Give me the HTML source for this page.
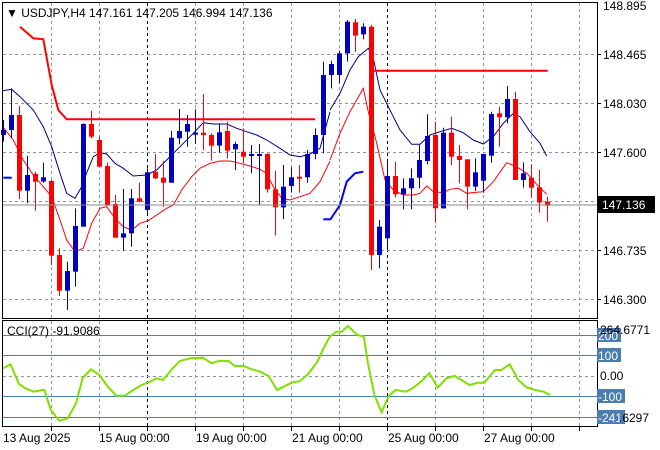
<!DOCTYPE html>
<html><head><meta charset="utf-8"><style>
html,body{margin:0;padding:0;background:#fff;width:660px;height:450px;overflow:hidden;font-family:"Liberation Sans",sans-serif}
svg{position:absolute;left:0;top:0}
text{font-family:"Liberation Sans",sans-serif;font-size:12px;fill:#000}
</style></head><body>
<svg id="s" width="660" height="450" xmlns="http://www.w3.org/2000/svg">
<g id="grid"></g>
<g id="lines"></g>
<g id="cand"></g>
<rect x="2.5" y="2.5" width="595" height="316" fill="none" stroke="#000"/>
<rect x="2.5" y="320.5" width="595" height="106" fill="none" stroke="#000"/>
<line x1="3" y1="205" x2="597" y2="205" stroke="#8a8a8a" stroke-width="1"/>
<text x="6" y="17" style="font-size:12px">▼ USDJPY,H4  147.161 147.205 146.994 147.136</text>
<g id="axis">
<text x="603" y="10">148.895</text>
<text x="603" y="59">148.465</text>
<text x="603" y="108">148.030</text>
<text x="603" y="157">147.600</text>
<text x="603" y="255">146.735</text>
<text x="603" y="304">146.300</text>
<rect x="597" y="196" width="58" height="17" fill="#000"/>
<text x="602" y="209" style="fill:#fff">147.136</text>
</g>
<g id="cci"></g>
<rect x="597" y="328" width="24" height="14" fill="#4a7eb0"/>
<text x="598" y="340" style="fill:#fff">200</text>
<text x="600" y="334">264.6771</text>
<rect x="597" y="348" width="24" height="14" fill="#4a7eb0"/>
<text x="598" y="360" style="fill:#fff">100</text>
<text x="600" y="380">0.00</text>
<rect x="597" y="389" width="28" height="14" fill="#4a7eb0"/>
<text x="598" y="401" style="fill:#fff">-100</text>
<rect x="597" y="410" width="28" height="14" fill="#4a7eb0"/>
<text x="598" y="422" style="fill:#fff">-241</text>
<text x="619" y="422">.6297</text>
<text x="7" y="335">CCI(27) -91.9086</text>
<text x="3" y="442">13 Aug 2025</text>
<text x="99" y="442">15 Aug 00:00</text>
<text x="196" y="442">19 Aug 00:00</text>
<text x="292" y="442">21 Aug 00:00</text>
<text x="388" y="442">25 Aug 00:00</text>
<text x="484" y="442">27 Aug 00:00</text>
</svg>
<script>
var NS="http://www.w3.org/2000/svg";
function el(p,t,a){var e=document.createElementNS(NS,t);for(var k in a)e.setAttribute(k,a[k]);document.getElementById(p).appendChild(e);return e;}
var vx=[51,99,147,195,243,291,339,387,435,483,531,579];
vx.forEach(function(x,i){var blk=(x==147||x==387);
 el("grid","line",{x1:x+.5,y1:3,x2:x+.5,y2:318,stroke:blk?"#000":"#8a96a2","stroke-dasharray":"3,3"});
 el("grid","line",{x1:x+.5,y1:321,x2:x+.5,y2:426,stroke:blk?"#000":"#8a96a2","stroke-dasharray":"3,3"});
 el("grid","line",{x1:x+.5,y1:426,x2:x+.5,y2:431,stroke:"#000"});
});
[54,103,152,201,250,299].forEach(function(y){el("grid","line",{x1:3,y1:y+.5,x2:597,y2:y+.5,stroke:"#8a96a2","stroke-dasharray":"3,3"});
 el("grid","line",{x1:597,y1:y+.5,x2:601,y2:y+.5,stroke:"#000"});});
[335,355,396,417].forEach(function(y){el("grid","line",{x1:3,y1:y+.5,x2:597,y2:y+.5,stroke:"#4a7eb0"});});
el("grid","line",{x1:3,y1:376.5,x2:597,y2:376.5,stroke:"#8a96a2","stroke-dasharray":"3,3"});
function pl(pts,off,col,w){var s=pts.map(function(p){return (off+p[0]/3).toFixed(1)+","+(p[1]/3).toFixed(1)}).join(" ");
 el("lines","polyline",{points:s,fill:"none",stroke:col,"stroke-width":w});}
pl([[8,272],[35,268],[60,290],[100,330],[130,380],[155,440],[180,520],[200,580],[225,595],[245,560],[260,518],[280,470],[300,458],[320,462],[345,490],[370,505],[400,528],[440,525],[470,510],[500,480],[540,440],[580,400],[610,368],[640,372],[680,372],[710,385],[740,395],[770,405],[800,420],[840,445],[870,465],[900,470],[930,462],[960,445],[990,335]],0,"#000080",1);
pl([[0,330],[30,280],[60,210],[85,170],[115,145],[130,175],[150,270],[175,320],[210,390],[245,433],[270,433],[300,405],[330,395],[365,385],[400,398],[430,420],[460,432],[490,410],[520,370],[550,340],[570,350],[600,395],[630,430],[650,468]],330,"#000080",1);
pl([[8,380],[40,420],[70,480],[100,525],[130,560],[155,590],[180,660],[200,720],[225,755],[250,745],[275,670],[300,625],[320,620],[345,655],[370,680],[395,690],[420,670],[445,662],[470,645],[500,625],[520,615],[545,570],[575,530],[600,505],[630,490],[660,483],[690,483],[720,490],[750,498],[780,508],[800,520],[820,560],[845,595],[870,600],[900,590],[930,580],[960,545],[990,483]],0,"#ff0000",1);
pl([[0,480],[30,400],[60,335],[100,265],[115,335],[140,430],[165,540],[190,570],[220,585],[250,585],[270,580],[290,558],[310,575],[340,578],[360,568],[385,565],[410,580],[440,577],[460,575],[490,545],[530,488],[560,500],[590,520],[620,553],[650,583]],330,"#ff0000",1);
pl([[60,80],[100,115],[130,118],[155,255],[175,330],[200,358],[945,358]],0,"#ff0000",2);
pl([[130,212],[653,212]],330,"#ff0000",2);
pl([[10,533],[35,533]],0,"#0000ff",2);
pl([[970,658],[990,658]],0,"#0000ff",2);
pl([[0,660],[30,615],[50,545],[75,520],[100,515]],330,"#0000ff",2);
var C=[["b",390,405,360,425],["b",345,390,265,415],["r",345,572,318,597],["b",525,572,468,610],["r",522,545,515,632],["b",532,545,488,548],["r",543,767,540,795],["r",765,872,745,888],["b",813,872,785,930],["b",678,815,625,860],["b",372,680,370,680],["r",372,410,333,415],["r",420,500,410,500],["r",498,617,488,617],["r",612,713,585,713],["b",700,713,567,752],["b",595,700,567,740],["r",595,605,548,607],["b",517,630,505,640],["r",516,535,462,538],["r",533,548,483,620],["b",413,548,393,548],["b",393,415,327,433],["b",372,395,345,440],["b",398,402,328,432],["r",398,405,282,450],["r",405,437,400,482],["b",397,437,373,458],["r",393,452,365,475],["b",432,448,425,510],["r",455,470,385,490],["b",462,468,435,520],["b",462,468,432,615],["r",462,568,460,578],["r",568,622,512,706],["b",560,622,495,658],["b",532,558,502,578],["r",530,533,495,578],["b",462,532,450,548],["b",405,462,385,478],["b",225,405,185,460],
["b",192,225,182,265],["b",160,225,152,250],["b",65,160,60,185],["r",67,107,57,155],["b",80,103,70,118],["r",80,765,75,810],["b",680,765,660,805],["b",528,715,482,750],["r",528,583,485,592],["b",565,583,535,628],["b",535,565,505,628],["b",480,533,432,565],["b",408,483,343,493],["r",405,625,365,668],["b",398,625,383,625],["r",398,470,350,495],["r",468,480,435,550],["r",478,560,478,628],["b",517,560,475,573],["b",462,542,462,578],["b",342,467,335,488],["r",340,352,320,440],["b",297,352,258,370],["r",297,540,275,540],["b",520,540,487,563],["r",533,563,493,593],["r",562,608,510,638],["r",605,617,590,665]];
C.forEach(function(c,i){var x=Math.round(3.3+8*i);var col=c[0]=="r"?"#ff0000":"#0000c0";
 var bt=c[1]/3,bb=c[2]/3,wt=c[3]/3,wb=c[4]/3;
 el("cand","rect",{x:x,y:wt.toFixed(1),width:1,height:Math.max(1,wb-wt).toFixed(1),fill:col});
 el("cand","rect",{x:x-2,y:bt.toFixed(1),width:5,height:Math.max(2,bb-bt).toFixed(1),fill:col});
});
var K=[[8,175],[25,163],[45,222],[60,235],[80,245],[100,240],[105,240],[120,300],[140,332],[160,325],[180,280],[195,205],[215,178],[235,195],[255,230],[275,257],[295,257],[315,240],[335,225],[355,215],[370,205],[385,210],[405,180],[425,153],[450,145],[480,143],[500,160],[520,152],[540,153],[555,168],[575,168],[595,178],[615,185],[635,198],[655,240],[670,230],[690,218],[710,213],[730,190],[750,155],[765,115],[780,80],[795,65],[808,65],[822,48],[845,75],[860,80],[870,160],[885,255],[902,307],[918,260],[935,240],[945,242],[960,245],[975,235],[995,215],[1015,190],[1035,233],[1055,205],[1075,198],[1095,213],[1110,225],[1130,218],[1145,218],[1170,180],[1185,180],[1205,163],[1225,210],[1245,232],[1265,240],[1285,245],[1300,255]];
el("cci","polyline",{points:K.map(function(p){return (p[0]/2.364).toFixed(1)+","+(310+p[1]/3).toFixed(1)}).join(" "),fill:"none",stroke:"#7fe000","stroke-width":2});
</script>
</body></html>
